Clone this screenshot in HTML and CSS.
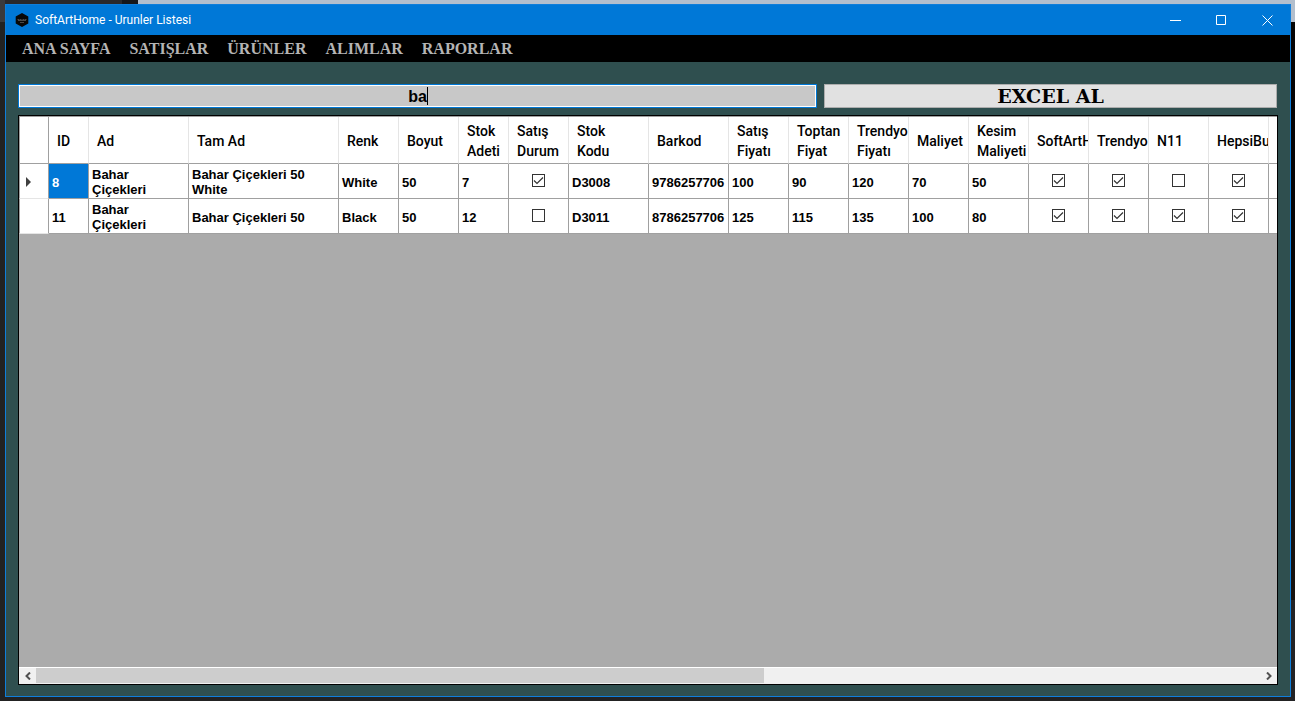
FILE: index.html
```html
<!DOCTYPE html>
<html lang="tr">
<head>
<meta charset="utf-8">
<title>SoftArtHome - Urunler Listesi</title>
<link rel="stylesheet" href="styles.css">
</head>
<body>
<div class="window">
  <header class="titlebar">
    <svg class="logo" viewBox="0 0 14 14" aria-hidden="true"><path d="M7 0l6.300 3.500v7L7 14 .7 10.500v-7z" fill="#080808"/><path d="M2.500 6.500h2M5 6.500h1.500M7.500 6.500h1.500M9.500 6.500h2M3 7.500h8M5 9.500h4" stroke="#5a5a5a" stroke-width=".8"/></svg>
    <h1 class="title">SoftArtHome - Urunler Listesi</h1>
    <div class="controls">
      <button class="control" aria-label="Simge durumuna küçült"><svg viewBox="0 0 11 11"><path d="M0 5.500h11"/></svg></button>
      <button class="control" aria-label="Ekranı kapla"><svg viewBox="0 0 11 11"><path d="M.5.5h9v9h-9z"/></svg></button>
      <button class="control" aria-label="Kapat"><svg viewBox="0 0 11 11"><path d="M.5.5l10 10M10.500.5l-10 10"/></svg></button>
    </div>
  </header>
  <nav class="menu">
    <a href="#">ANA SAYFA</a>
    <a href="#">SATIŞLAR</a>
    <a href="#">ÜRÜNLER</a>
    <a href="#">ALIMLAR</a>
    <a href="#">RAPORLAR</a>
  </nav>
  <main class="content">
    <div class="toolbar">
      <div class="field">
        <input class="search" type="text" value="ba" aria-label="Ürün ara">
        <span class="caret"></span>
      </div>
      <button class="export">EXCEL AL</button>
    </div>
    <section class="grid">
      <div class="viewport">
        <table class="products">
          <colgroup>
            <col class="w30"><col class="w40"><col class="w100"><col class="w150"><col class="w60"><col class="w60"><col class="w50"><col class="w60"><col class="w80"><col class="w80"><col class="w60"><col class="w60"><col class="w60"><col class="w60"><col class="w60"><col class="w60"><col class="w60"><col class="w60"><col class="w60"><col class="w60">
          </colgroup>
          <thead>
            <tr>
              <td class="rowhead"></td>
              <th>ID</th><th>Ad</th><th>Tam Ad</th><th>Renk</th><th>Boyut</th>
              <th>Stok<br>Adeti</th><th>Satış<br>Durum</th><th>Stok<br>Kodu</th><th>Barkod</th>
              <th>Satış<br>Fiyatı</th><th>Toptan<br>Fiyat</th><th>Trendyo<br>Fiyatı</th><th>Maliyet</th><th>Kesim<br>Maliyeti</th>
              <th>SoftArtH</th><th>Trendyo</th><th>N11</th><th>HepsiBu</th><th></th>
            </tr>
          </thead>
          <tbody>
            <tr>
              <td class="rowhead"><svg class="pointer" viewBox="0 0 5 10"><path d="M0 0l5 5-5 5z"/></svg></td>
              <td class="selected">8</td><td class="wrap">Bahar Çiçekleri</td><td class="wrap">Bahar Çiçekleri 50 White</td><td>White</td><td>50</td><td>7</td>
              <td class="tick"><input type="checkbox" aria-label="Satış Durum 8" checked></td>
              <td>D3008</td><td>9786257706</td><td>100</td><td>90</td><td>120</td><td>70</td><td>50</td>
              <td class="tick"><input type="checkbox" aria-label="SoftArtHome 8" checked></td>
              <td class="tick"><input type="checkbox" aria-label="Trendyol 8" checked></td>
              <td class="tick"><input type="checkbox" aria-label="N11 8"></td>
              <td class="tick"><input type="checkbox" aria-label="HepsiBurada 8" checked></td>
              <td></td>
            </tr>
            <tr>
              <td class="rowhead"></td>
              <td>11</td><td class="wrap">Bahar Çiçekleri</td><td class="wrap">Bahar Çiçekleri 50</td><td>Black</td><td>50</td><td>12</td>
              <td class="tick"><input type="checkbox" aria-label="Satış Durum 11"></td>
              <td>D3011</td><td>8786257706</td><td>125</td><td>115</td><td>135</td><td>100</td><td>80</td>
              <td class="tick"><input type="checkbox" aria-label="SoftArtHome 11" checked></td>
              <td class="tick"><input type="checkbox" aria-label="Trendyol 11" checked></td>
              <td class="tick"><input type="checkbox" aria-label="N11 11" checked></td>
              <td class="tick"><input type="checkbox" aria-label="HepsiBurada 11" checked></td>
              <td></td>
            </tr>
          </tbody>
        </table>
      </div>
      <div class="scrollbar">
        <button class="arrow" aria-label="Sola kaydır"><svg viewBox="0 0 6 8"><path d="M5 .5L1.500 4 5 7.500"/></svg></button>
        <div class="track"><div class="thumb"></div></div>
        <button class="arrow" aria-label="Sağa kaydır"><svg viewBox="0 0 6 8"><path d="M1 .5L4.500 4 1 7.500"/></svg></button>
      </div>
    </section>
  </main>
</div>
</body>
</html>
```
FILE: styles.css
```css
* { box-sizing: border-box; }

body {
  margin: 0;
  height: 100vh;
  padding: 4px 4px 4px 5px;
  display: flex;
  background:
    linear-gradient(#3a3a3d, #3a3a3d) 0 0 / 5px 22px no-repeat,
    linear-gradient(90deg, #29292c 122px, #15171a 122px 138px, #b3bfcd 138px) 0 0 / 100% 4px no-repeat,
    linear-gradient(#b3bfcd 22px, #050505 22px 380px, #17120f 380px 600px, #232326 600px) 100% 0 / 5px 100% no-repeat,
    #222;
}

button { margin: 0; padding: 0; border: 0; font: inherit; }

.window {
  flex: 1;
  min-width: 0;
  display: flex;
  flex-direction: column;
  border: 1px solid #0f7edb;
  background: #2f4f4f;
}

.titlebar {
  height: 30px;
  display: flex;
  align-items: center;
  padding-left: 9px;
  background: #0078d7;
  color: #fff;
}
.logo { width: 14px; height: 14px; }
.title { margin: 0 0 0 6px; font: 12px/16px Roboto, "Open Sans", sans-serif; }
.controls { margin-left: auto; display: flex; align-self: stretch; }
.control {
  width: 46px;
  display: flex;
  align-items: center;
  justify-content: center;
  background: none;
}
.control svg { width: 11px; height: 11px; fill: none; stroke: #fff; }

.menu {
  height: 27px;
  display: flex;
  align-items: center;
  gap: 19px;
  padding-left: 16px;
  background: #000;
}
.menu a {
  color: #b4b4b4;
  font: bold 16px/20px "Liberation Serif", serif;
  text-decoration: none;
}

.content {
  flex: 1;
  min-height: 0;
  display: flex;
  flex-direction: column;
  gap: 7px;
  padding: 22px 12px 11px;
}

.toolbar {
  display: grid;
  grid-template-columns: 799fr 453fr;
  gap: 7px;
  height: 24px;
  padding-right: 1px;
}
.field { position: relative; display: flex; }
.search {
  flex: 1;
  min-width: 0;
  padding: 2px 0 0;
  border: 1px solid #0078d7;
  box-shadow: inset 0 0 0 1px #fff;
  outline: 0;
  background: #c8c8c8;
  color: #000;
  font: bold 16px/20px "Liberation Sans", sans-serif;
  text-align: center;
}
.caret {
  position: absolute;
  top: 3px;
  left: calc(50% + 9px);
  width: 1px;
  height: 18px;
  background: #000;
}
.export {
  border: 1px solid #adadad;
  background: #e1e1e1;
  color: #000;
  font: 900 19px/20px "DejaVu Serif", serif;
}

.grid {
  flex: 1;
  min-height: 0;
  display: flex;
  flex-direction: column;
  border: 1px solid #000;
  background: #ababab;
}
.viewport { flex: 1; min-height: 0; overflow: hidden; }

.products {
  width: 1310px;
  table-layout: fixed;
  border-spacing: 0;
  border-top: 1px solid #a0a0a0;
  background: #fff;
  color: #000;
}
.w30 { width: 30px; }
.w40 { width: 40px; }
.w50 { width: 50px; }
.w60 { width: 60px; }
.w80 { width: 80px; }
.w100 { width: 100px; }
.w150 { width: 150px; }

.products th,
.products td {
  border-right: 1px solid #a0a0a0;
  border-bottom: 1px solid #a0a0a0;
  overflow: hidden;
  white-space: nowrap;
  text-align: left;
  vertical-align: middle;
}
.products th {
  height: 47px;
  padding: 2px 0 0 8px;
  border-right-color: #e5e5e5;
  font: 500 14px/20px Roboto, sans-serif;
}
.products td {
  height: 35px;
  padding: 2px 0 0 3px;
  font: bold 13px/15px "Liberation Sans", sans-serif;
}
.products td.wrap { padding-right: 4px; white-space: normal; }
.products td.rowhead { padding: 2px 0 0 6px; border-left: 1px solid #a0a0a0; }
.products tbody td.rowhead { border-bottom-color: #e5e5e5; }
.products td.selected { background: #0078d7; color: #fff; }
.products td.tick { padding: 0 0 2px; }
.pointer { display: block; width: 5px; height: 10px; fill: #404040; }

.tick input {
  appearance: none;
  display: block;
  width: 13px;
  height: 13px;
  margin: 0 auto;
  border: 1px solid #333;
  background: #fff;
}
.tick input:checked {
  background: url("data:image/svg+xml,%3Csvg xmlns='http://www.w3.org/2000/svg' viewBox='0 0 11 11'%3E%3Cpath d='M1 5.500l3 3 6-6' fill='none' stroke='%23333' stroke-width='1.200'/%3E%3C/svg%3E") center / 11px 11px no-repeat;
}

.scrollbar { height: 17px; display: flex; border-top: 1px solid #fff; background: #f0f0f0; }
.arrow { width: 17px; display: flex; align-items: center; justify-content: center; background: none; }
.arrow svg { width: 6px; height: 8px; fill: none; stroke: #505050; stroke-width: 2; }
.track { flex: 1; }
.thumb { width: 59.5%; height: 15px; background: #cdcdcd; }
```
